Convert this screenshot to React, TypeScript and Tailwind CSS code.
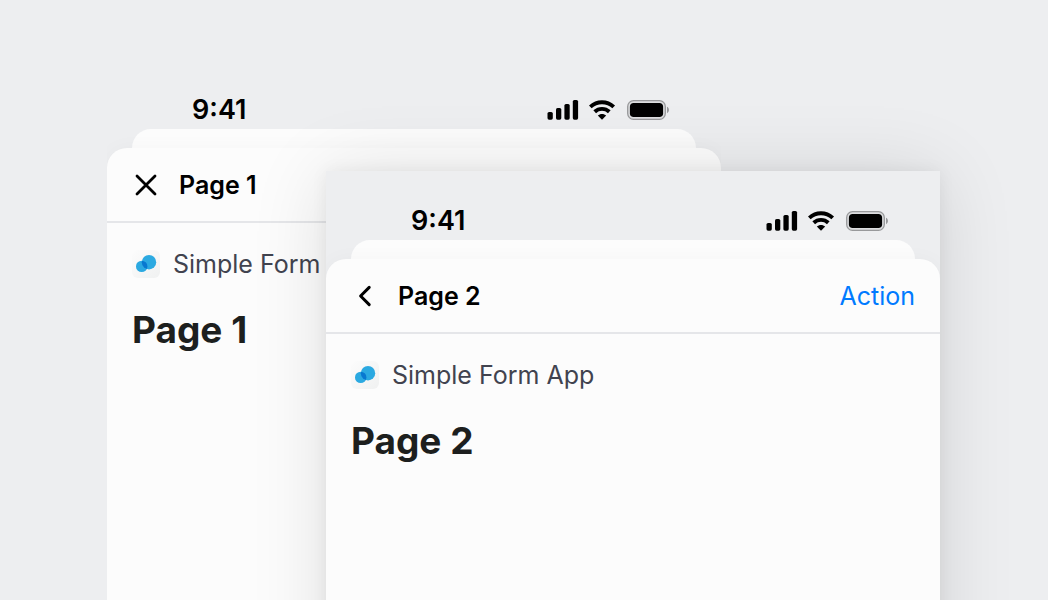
import type { ReactNode } from 'react'

function SignalIcon() {
  return (
    <svg width="32" height="20" viewBox="0 0 32 20" fill="#000" aria-hidden="true">
      <rect x="0.5" y="12" width="5.3" height="7.7" rx="1.6" />
      <rect x="9" y="8" width="5.3" height="11.7" rx="1.6" />
      <rect x="17.4" y="4" width="5.3" height="15.7" rx="1.6" />
      <rect x="25.8" y="0" width="5.3" height="19.7" rx="1.6" />
    </svg>
  )
}

function WifiIcon() {
  return (
    <svg width="28" height="20" viewBox="0 0 28 20" fill="none" stroke="#000" strokeWidth="3.9" aria-hidden="true">
      <path d="M1.3 6.9C8 .6 18 .6 24.7 6.9" />
      <path d="M5.7 11.8c4.2-3.9 10.4-3.9 14.6 0" />
      <path d="M13 19.8l-4.2-4.3c2.3-2.1 6.1-2.1 8.4 0z" fill="#000" stroke="none" />
    </svg>
  )
}

function BatteryIcon() {
  return (
    <svg width="43" height="20" viewBox="0 0 43 20" aria-hidden="true">
      <rect x="0.7" y="0.7" width="37.6" height="18.6" rx="5.8" fill="#dcdddf" stroke="#98999b" strokeWidth="1.3" />
      <rect x="2.9" y="2.9" width="33.2" height="14.2" rx="3.8" fill="#000" />
      <path d="M40 6.8c2.6 1.2 2.6 5.2 0 6.4z" fill="#98999b" />
    </svg>
  )
}

function CloseIcon() {
  return (
    <svg width="28" height="28" viewBox="0 0 28 28" fill="none" stroke="#000" strokeWidth="2.8" strokeLinecap="round" aria-hidden="true">
      <path d="M5 5l18 18M23 5L5 23" />
    </svg>
  )
}

function BackIcon() {
  return (
    <svg width="28" height="28" viewBox="0 0 28 28" fill="none" stroke="#000" strokeWidth="3" strokeLinecap="round" strokeLinejoin="round" aria-hidden="true">
      <path d="M18.2 5.4L9.6 14l8.6 8.6" />
    </svg>
  )
}

function AppLogo() {
  return (
    <svg width="28" height="28" viewBox="0 0 28 28" aria-hidden="true">
      <defs>
        <linearGradient id="tile" x1="0" y1="0" x2="1" y2="1">
          <stop offset="0" stopColor="#fcfcfc" />
          <stop offset="1" stopColor="#f0f1f1" />
        </linearGradient>
        <clipPath id="big">
          <circle cx="17" cy="12.2" r="7.2" />
        </clipPath>
      </defs>
      <rect width="28" height="28" rx="6" fill="url(#tile)" />
      <circle cx="17" cy="12.2" r="7.2" fill="#2ba9e1" />
      <circle cx="9.7" cy="16.4" r="5.7" fill="#2ba9e1" />
      <circle cx="9.7" cy="16.4" r="5.7" fill="#0878d0" clipPath="url(#big)" />
    </svg>
  )
}

type PhoneProps = {
  title: string
  icon: ReactNode
  iconLabel: string
  action?: string
  className: string
}

function Phone({ title, icon, iconLabel, action, className }: PhoneProps) {
  return (
    <section className={`flex flex-col overflow-hidden bg-[#edeef0] ${className}`}>
      {/* Status bar */}
      <div className="flex h-[69px] items-center justify-between pt-[30px] pr-[51px] pl-[85px]">
        <span className="text-[27px] leading-9 font-semibold text-black">9:41</span>
        <div className="flex items-center gap-[10px]">
          <SignalIcon />
          <WifiIcon />
          <BatteryIcon />
        </div>
      </div>

      {/* Stacked sheets */}
      <div className="mx-[25px] h-[19px] rounded-t-[19px] bg-[#fcfcfc]" />
      <div className="flex-1 rounded-t-[20px] bg-[#fcfcfc] shadow-[0_0_20px_rgba(0,0,0,0.03)]">
        <header className="flex h-[75px] items-center gap-[19px] border-b-2 border-[#e5e6e9] px-[25px]">
          <button type="button" aria-label={iconLabel}>{icon}</button>
          <h2 className="text-[25px] leading-8 font-semibold text-black">{title}</h2>
          {action && (
            <button type="button" className="ml-auto text-[25px] leading-8 text-[#007aff]">{action}</button>
          )}
        </header>

        <div className="px-[25px] pt-[25px]">
          <div className="flex items-center gap-[13px]">
            <AppLogo />
            <span className="text-[25px] leading-8 whitespace-nowrap text-[#41434f]">Simple Form App</span>
          </div>
          <h1 className="mt-6 text-[37px] leading-[52px] font-bold text-[#1d1f1e]">{title}</h1>
        </div>
      </div>
    </section>
  )
}

export default function App() {
  return (
    <main className="grid h-screen grid-cols-[219fr_395fr_219fr] overflow-hidden bg-[#edeef0] pr-[108px] pl-[107px] font-['Inter',sans-serif]">
      {/* Both phones run past the bottom edge of the page */}
      <Phone
        title="Page 1"
        icon={<CloseIcon />}
        iconLabel="Close"
        className="col-start-1 col-end-3 row-start-1 mt-[60px] -mb-24"
      />
      <Phone
        title="Page 2"
        icon={<BackIcon />}
        iconLabel="Back"
        action="Action"
        className="z-10 col-start-2 col-end-4 row-start-1 mt-[171px] -mb-24 shadow-[0_0_16px_rgba(0,0,0,0.06),0_4px_72px_rgba(0,0,0,0.12)]"
      />
    </main>
  )
}
